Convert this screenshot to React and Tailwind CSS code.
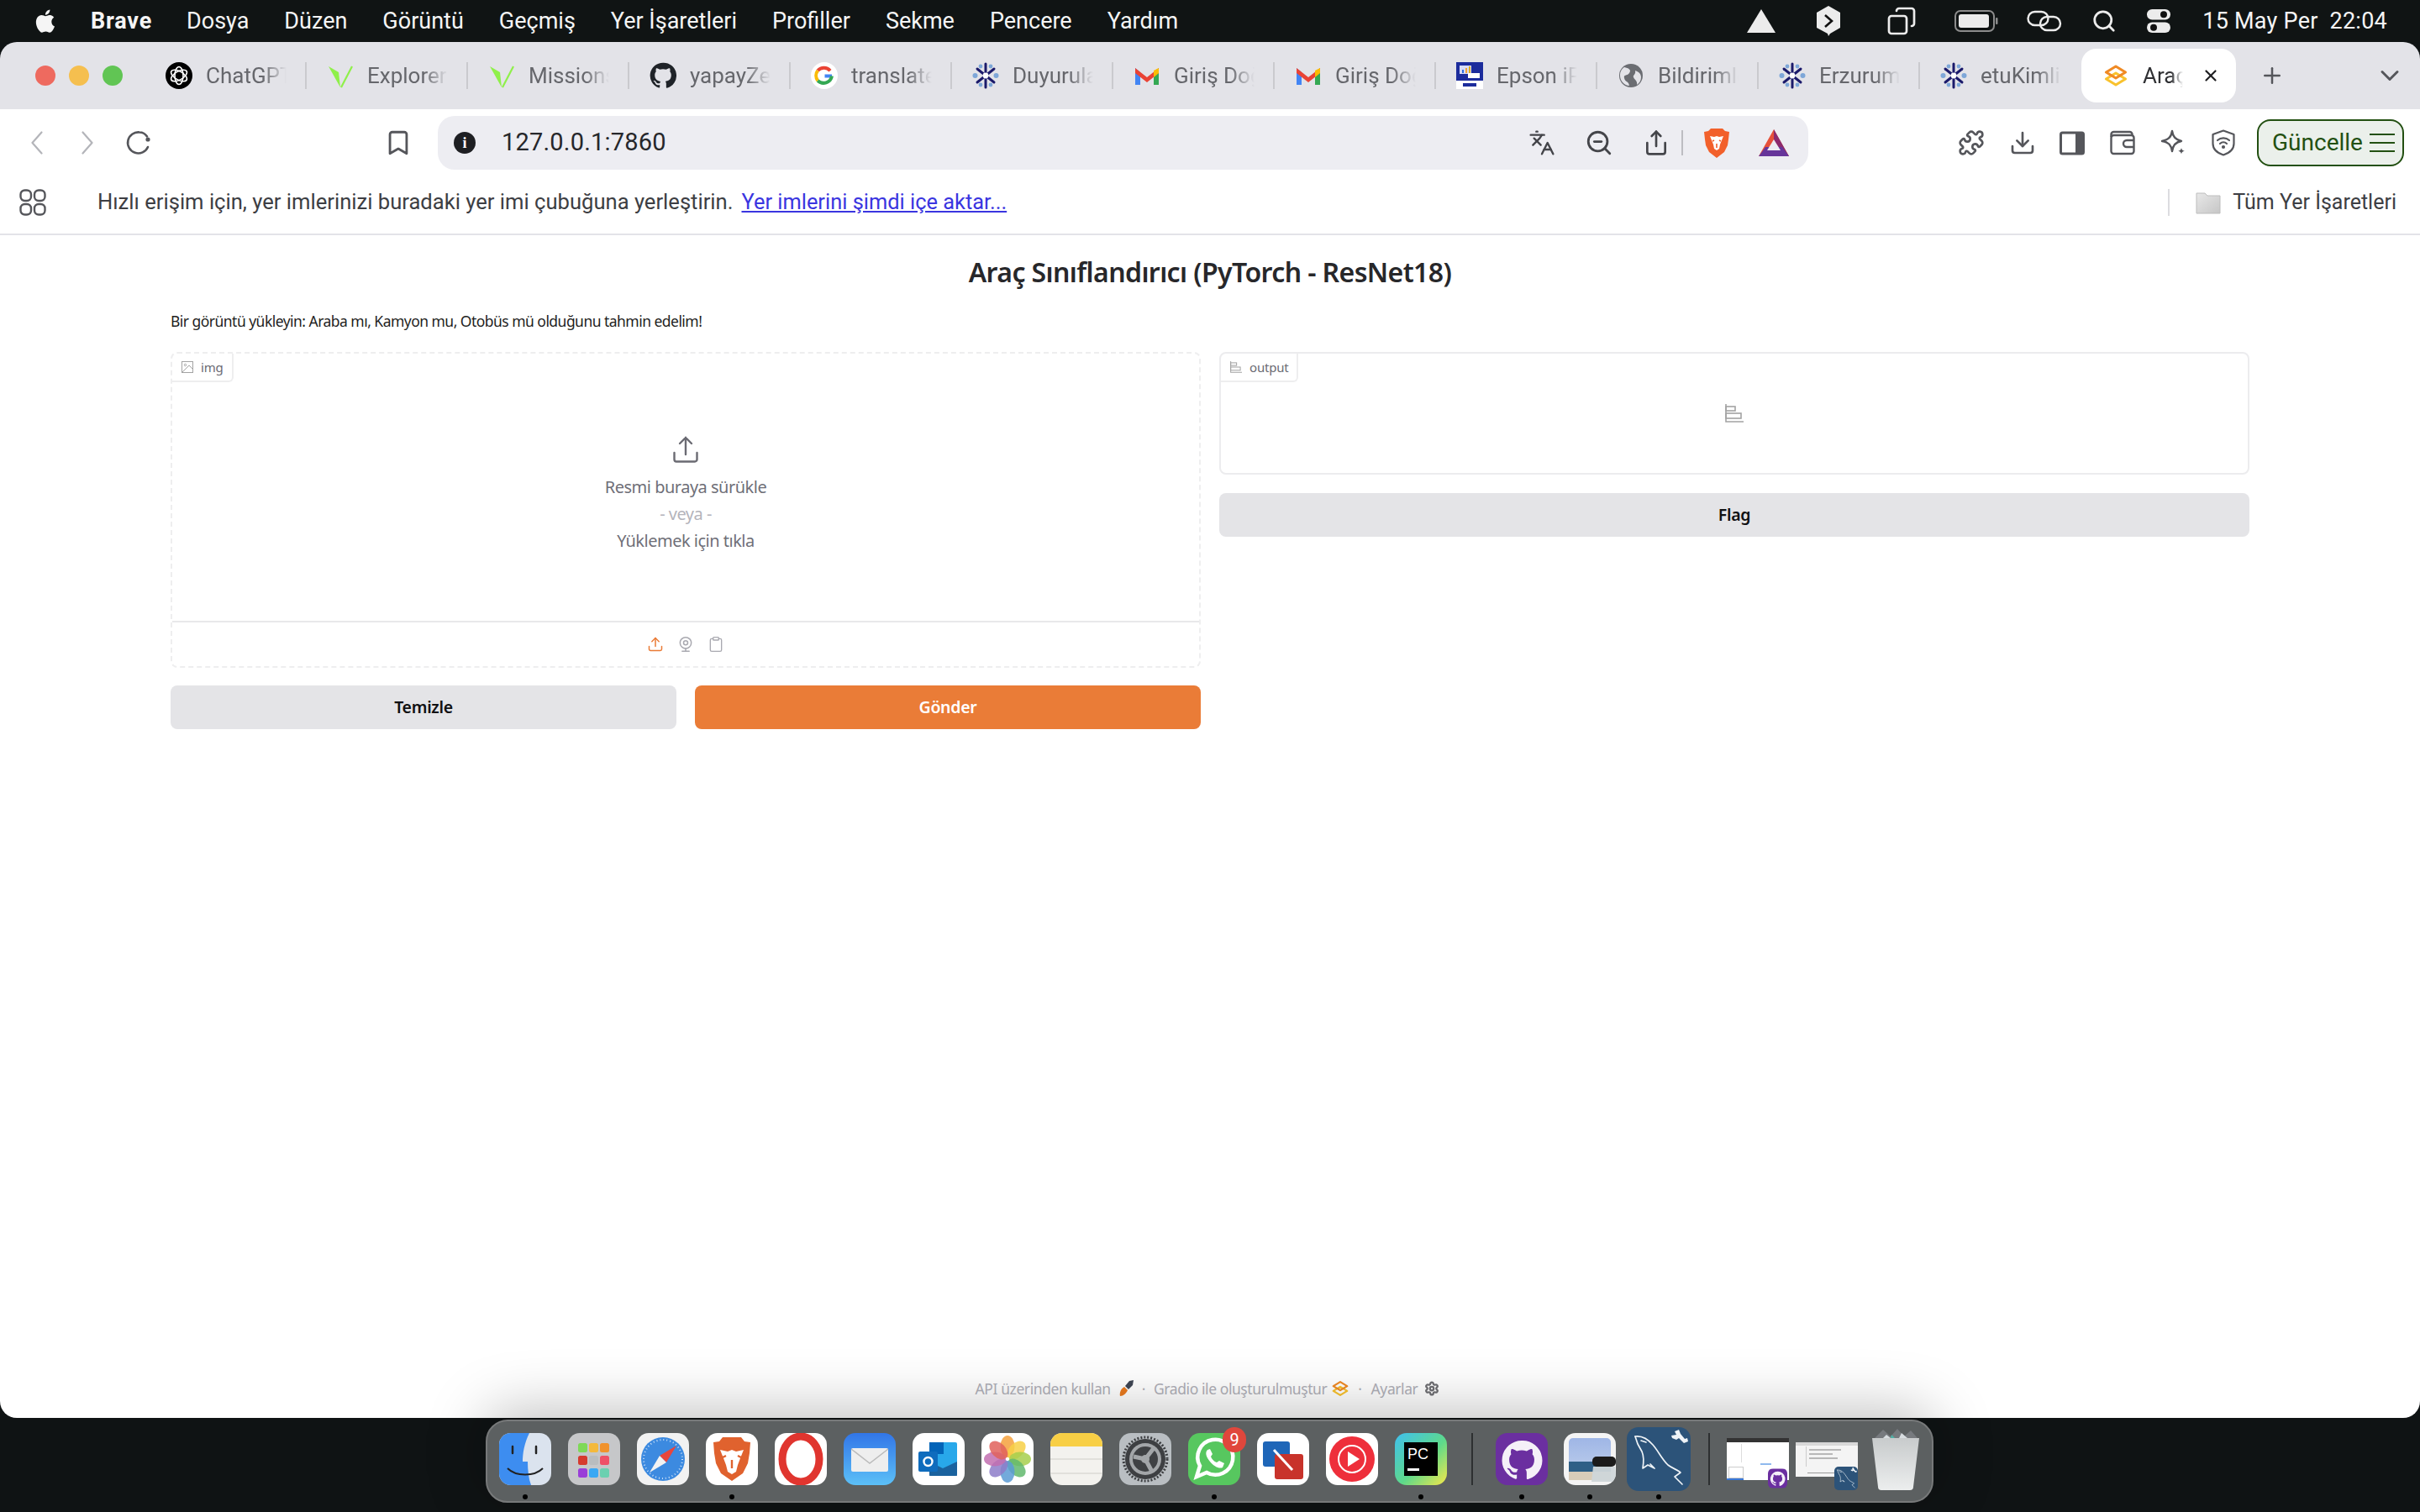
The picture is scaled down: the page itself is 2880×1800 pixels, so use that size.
import React from "react";
import { Bookmark, Languages, ZoomOut, Share, Puzzle, Download, Plus, X, ChevronDown, Search, Copy, Upload, Clipboard, Webcam, Settings } from "lucide-react";

const SF = "font-['Roboto','Liberation_Sans',sans-serif]";
const SS = "font-['Noto_Sans','Open_Sans',sans-serif]";

const GH_PATH = "M12 .5a11.5 11.5 0 0 0-3.64 22.41c.58.1.79-.25.79-.55v-2.02c-3.2.7-3.88-1.37-3.88-1.37-.52-1.33-1.28-1.69-1.28-1.69-1.05-.71.08-.7.08-.7 1.16.08 1.77 1.19 1.77 1.19 1.03 1.76 2.7 1.25 3.36.96.1-.75.4-1.25.73-1.54-2.55-.29-5.24-1.28-5.24-5.68 0-1.25.45-2.28 1.18-3.08-.12-.29-.51-1.46.11-3.04 0 0 .97-.31 3.16 1.18a11 11 0 0 1 5.76 0c2.2-1.49 3.16-1.18 3.16-1.18.63 1.58.23 2.75.11 3.04.74.8 1.18 1.83 1.18 3.08 0 4.41-2.69 5.39-5.25 5.67.41.36.78 1.06.78 2.14v3.17c0 .31.21.66.8.55A11.5 11.5 0 0 0 12 .5Z";

const Gradio = ({ s = 28 }) => (
  <svg width={s} height={s} viewBox="0 0 28 28" fill="none" strokeWidth="3.2" strokeLinejoin="round">
    <path d="M14 11 25.5 18 14 25 2.5 18Z" stroke="#f9c22e" />
    <path d="M14 3 25.5 10 14 17 2.5 10Z" stroke="#f08a24" />
  </svg>
);

const Snow = ({ s = 32 }) => (
  <svg width={s} height={s} viewBox="0 0 32 32">
    <g stroke="#1b1a6b" strokeWidth="3" strokeLinecap="round">
      <path d="M16 2v28" /><path d="M6 8l20 16" /><path d="M26 8 6 24" />
    </g>
    <g fill="#7ea7d8"><circle cx="3.5" cy="16" r="3" /><circle cx="28.5" cy="16" r="3" /><circle cx="10" cy="5" r="2.4" /><circle cx="22" cy="5" r="2.4" /><circle cx="10" cy="27" r="2.4" /><circle cx="22" cy="27" r="2.4" /></g>
    <circle cx="16" cy="16" r="3.4" fill="#fff" />
  </svg>
);

const Gmail = () => (
  <svg width="32" height="32" viewBox="0 0 32 32" fill="none">
    <path d="M2 7v20h6V12Z" fill="#4285f4" /><path d="M30 7v20h-6V12Z" fill="#34a853" />
    <path d="M2 7 16 18 30 7v6L16 24 2 13Z" fill="#ea4335" /><path d="M24 10l6-3v6l-6 5Z" fill="#fbbc04" />
  </svg>
);

const Vee = () => (
  <svg width="32" height="32" viewBox="0 0 32 32" fill="none">
    <path d="M2 5 16 30 14 12Z" fill="#8ff04a" /><path d="M30 5 17 30" stroke="#8ff04a" strokeWidth="2.2" />
  </svg>
);

const ChatGPT = () => (
  <svg width="32" height="32" viewBox="0 0 32 32" fill="none" stroke="#fff" strokeWidth="1.6">
    <circle cx="16" cy="16" r="16" fill="#000" stroke="none" />
    <ellipse cx="16" cy="16" rx="5" ry="10.5" /><ellipse cx="16" cy="16" rx="5" ry="10.5" transform="rotate(60 16 16)" /><ellipse cx="16" cy="16" rx="5" ry="10.5" transform="rotate(120 16 16)" />
  </svg>
);

const GitHubFav = () => (
  <svg width="32" height="32" viewBox="0 0 24 24" fill="#1f2328"><path d={GH_PATH} /></svg>
);

const Google = () => (
  <svg width="32" height="32" viewBox="0 0 32 32" fill="none">
    <circle cx="16" cy="16" r="16" fill="#fff" />
    <path d="M25 16.5H16.5" stroke="#4285f4" strokeWidth="4" />
    <path d="M23 10.2A10 10 0 0 0 8.2 10" stroke="#ea4335" strokeWidth="4" />
    <path d="M8.2 10a10 10 0 0 0 0 12" stroke="#fbbc05" strokeWidth="4" />
    <path d="M8.2 22A10 10 0 0 0 25 16.5" stroke="#34a853" strokeWidth="4" />
  </svg>
);

const Epson = () => (
  <svg width="32" height="32" viewBox="0 0 32 32">
    <rect width="32" height="32" fill="#fff" /><rect width="32" height="22" fill="#1c2c9c" />
    <rect x="4" y="4" width="14" height="10" fill="#d8dcf5" /><rect x="7" y="9" width="2" height="4" fill="#2f6fe0" /><rect x="11" y="7" width="2" height="6" fill="#f2a33a" /><rect x="15" y="5" width="2" height="8" fill="#e0b020" />
    <rect x="14" y="13" width="14" height="6" fill="#fff" />
    <rect x="8" y="25" width="16" height="4" fill="#1c2c9c" />
  </svg>
);

const Globe = () => (
  <svg width="28" height="32" viewBox="0 0 28 28">
    <circle cx="14" cy="14" r="14" fill="#6b6d72" />
    <path d="M6 4c5 1 9 3 6 7s-7 1-6 6 5 3 6 9C6 26 1 20 1 14 1 9 3 6 6 4ZM19 8c3 1 7 3 7 8 0 4-2 7-5 9 1-5-3-6-4-9s3-3 2-8Z" fill="#e3e3e8" />
  </svg>
);

const tabs = [
  ["ChatGPT", <ChatGPT />], ["Explorer", <Vee />], ["Missions", <Vee />], ["yapayZeka", <GitHubFav />],
  ["translate", <Google />], ["Duyurular", <Snow />], ["Giriş Doğr", <Gmail />], ["Giriş Doğr", <Gmail />],
  ["Epson iPrint", <Epson />], ["Bildirimler", <Globe />], ["Erzurum", <Snow />], ["etuKimlik", <Snow />],
];

const Tab = ({ label, icon, last }) => (
  <div className="relative flex h-full w-[192px] shrink-0 items-center pl-[24px]">
    <span className="flex w-[32px] shrink-0 justify-center">{icon}</span>
    <span className="ml-[16px] w-[96px] overflow-hidden whitespace-nowrap text-[26px] text-[#66676c] [mask-image:linear-gradient(to_right,black_70%,transparent)]">{label}</span>
    {!last && <span className="absolute right-0 top-[1px] h-[32px] w-[2px] bg-[#cacace]" />}
  </div>
);

const TabStrip = () => (
  <div className="flex h-[80px] shrink-0 items-center bg-[#e3e3e8] pl-[42px]">
    <span className="h-[24px] w-[24px] rounded-full bg-[#ee6a5f]" />
    <span className="ml-[16px] h-[24px] w-[24px] rounded-full bg-[#f5bf4f]" />
    <span className="ml-[16px] h-[24px] w-[24px] rounded-full bg-[#61c554]" />
    <div className="ml-[27px] flex h-[34px] items-center">
      {tabs.map((t, i) => <Tab key={i} label={t[0]} icon={t[1]} last={i === tabs.length - 1} />)}
    </div>
    <div className="flex h-[64px] w-[184px] shrink-0 items-center rounded-[18px] bg-white pl-[27px]">
      <Gradio s={28} />
      <span className="ml-[18px] w-[48px] overflow-hidden whitespace-nowrap text-[26px] text-[#303134] [mask-image:linear-gradient(to_right,black_70%,transparent)]">Araç</span>
      <X className="ml-[22px]" size={22} color="#1f1f22" strokeWidth={2.4} />
    </div>
    <Plus className="ml-[28px]" size={30} color="#55565b" strokeWidth={2} />
    <ChevronDown className="ml-[107px]" size={36} color="#55565b" strokeWidth={2} />
  </div>
);

const Reload = () => (
  <svg width="32" height="32" viewBox="0 0 32 32" fill="none" stroke="#55565b" strokeWidth="2.6" strokeLinecap="round">
    <path d="M27 21A12.5 12.5 0 1 1 17 3.5c4 0 7 2 9 5" /><circle cx="27" cy="12" r="2.6" fill="#55565b" stroke="none" />
  </svg>
);

const Chevron = ({ flip }) => (
  <svg width="14" height="28" viewBox="0 0 14 28" fill="none" stroke="#b4b5ba" strokeWidth="2.2" strokeLinecap="round" strokeLinejoin="round">
    <path d={flip ? "M1.5 1.5 12.5 14 1.5 26.5" : "M12.5 1.5 1.5 14 12.5 26.5"} />
  </svg>
);

const BraveLogo = ({ w = 32, h = 36 }) => (
  <svg width={w} height={h} viewBox="0 0 32 36">
    <path d="M9 1h14l3 3 5 1-1 9-1 7-4 8-9 7-9-7-4-8-1-7L1 5l5-1Z" fill="#f2602b" />
    <path d="M8 10l5 1 3-1 3 1 5-1-2 5-2 5-1 5-3 2-3-2-1-5-2-5Z" fill="#fff" />
    <path d="M13 15l-2 1M19 15l2 1M16 19v5" stroke="#f2602b" strokeWidth="1.6" />
  </svg>
);

const BAT = () => (
  <svg width="36" height="32" viewBox="0 0 36 32">
    <path d="M18 0 36 32H0Z" fill="#e6513a" /><path d="M18 0 36 32H24L18 15Z" fill="#8c2a6d" /><path d="M0 32 8 21H28L36 32Z" fill="#66359a" /><path d="M18 12 26 25H10Z" fill="#ededf2" />
  </svg>
);

const SideBar = () => (
  <svg width="30" height="30" viewBox="0 0 30 30" fill="none">
    <rect x="1.5" y="3" width="27" height="25" rx="2" stroke="#55565b" strokeWidth="3" /><rect x="19" y="3" width="10" height="25" rx="1" fill="#55565b" />
  </svg>
);

const WalletIcon = () => (
  <svg width="30" height="30" viewBox="0 0 30 30" fill="none" stroke="#55565b" strokeWidth="2.4" strokeLinejoin="round">
    <path d="M1.5 8V5a3 3 0 0 1 3-3h19a3 3 0 0 1 3 3v1" /><rect x="1.5" y="6" width="27" height="22" rx="3" />
    <path d="M28 12H20a3.5 3.5 0 0 0 0 8h8" />
  </svg>
);

const SparkleIcon = () => (
  <svg width="32" height="32" viewBox="0 0 32 32" fill="none" stroke="#55565b" strokeWidth="2.4" strokeLinejoin="round">
    <path d="M14 2c1 7 4 10 11 12-7 1-10 5-11 12-1-7-4-11-12-12 8-2 11-5 12-12Z" />
    <path d="M26 22c.4 2.3 1.4 3.3 3.8 3.8-2.4.4-3.4 1.4-3.8 3.8-.4-2.4-1.4-3.4-3.8-3.8 2.4-.5 3.4-1.5 3.8-3.8Z" fill="#55565b" stroke="none" transform="translate(-1 0)" />
  </svg>
);

const ShieldWifi = () => (
  <svg width="30" height="32" viewBox="0 0 30 32" fill="none" stroke="#55565b" strokeWidth="2.2" strokeLinecap="round" strokeLinejoin="round">
    <path d="M15 1.5 27.5 6v11c0 6.5-5 11-12.5 13.5C7.5 28 2.5 23.5 2.5 17V6Z" />
    <path d="M8 13a10.5 10.5 0 0 1 14 0M11 17a6 6 0 0 1 8 0" /><circle cx="15" cy="21" r="1" fill="#55565b" />
  </svg>
);

const AppsGrid = () => (
  <svg width="32" height="32" viewBox="0 0 32 32" fill="none" stroke="#55565b" strokeWidth="2.4">
    <rect x="1.5" y="1.5" width="12.5" height="12.5" rx="5" /><rect x="18" y="1.5" width="12.5" height="12.5" rx="5" /><rect x="1.5" y="18" width="12.5" height="12.5" rx="5" /><rect x="18" y="18" width="12.5" height="12.5" rx="5" />
  </svg>
);

const InfoDot = () => (
  <span className="flex h-[26px] w-[26px] items-center justify-center rounded-full bg-[#1e1f23] font-['Liberation_Serif',serif] text-[18px] font-bold text-white">i</span>
);

const Toolbar = () => (
  <div className="flex h-[80px] shrink-0 items-center bg-white pl-[37px]">
    <Chevron />
    <span className="ml-[46px]"><Chevron flip /></span>
    <span className="ml-[38px]"><Reload /></span>
    <Bookmark className="ml-[276px]" size={34} color="#55565b" strokeWidth={2} />
    <div className="ml-[30px] flex h-[64px] w-[1631px] shrink-0 items-center rounded-[20px] bg-[#ededf2] pl-[19px]">
      <InfoDot />
      <span className="ml-[31px] text-[29px] tracking-[0.2px] text-[#26272b]">127.0.0.1:7860</span>
      <Languages className="ml-[1026px]" size={32} color="#44454a" strokeWidth={1.8} />
      <ZoomOut className="ml-[35px]" size={34} color="#44454a" strokeWidth={2} />
      <Share className="ml-[35px]" size={32} color="#44454a" strokeWidth={2} />
      <span className="ml-[14px] h-[30px] w-[2px] bg-[#bdbdc2]" />
      <span className="ml-[24px]"><BraveLogo /></span>
      <span className="ml-[34px]"><BAT /></span>
    </div>
    <Puzzle className="ml-[178px]" size={32} color="#55565b" strokeWidth={2} />
    <Download className="ml-[29px]" size={32} color="#55565b" strokeWidth={2} />
    <span className="ml-[28px]"><SideBar /></span>
    <span className="ml-[30px]"><WalletIcon /></span>
    <span className="ml-[30px]"><SparkleIcon /></span>
    <span className="ml-[28px]"><ShieldWifi /></span>
    <div className="ml-[25px] flex h-[56px] w-[175px] shrink-0 items-center rounded-[16px] border-2 border-[#235012] bg-[#ebf0eb] pl-[16px] text-[28px] text-[#235012]">
      Güncelle
      <span className="ml-[8px] flex w-[30px] flex-col gap-[8px]">
        <span className="h-[2px] bg-[#235012]" /><span className="h-[2px] bg-[#235012]" /><span className="h-[2px] bg-[#235012]" />
      </span>
    </div>
  </div>
);

const Folder = () => (
  <svg width="30" height="30" viewBox="0 0 30 30">
    <defs><linearGradient id="fd" x1="0" y1="0" x2="1" y2="1"><stop offset="0" stopColor="#e8e8e8" /><stop offset="1" stopColor="#c6c6c6" /></linearGradient></defs>
    <path d="M1 4h10l3 3h15v21H1Z" fill="url(#fd)" stroke="#bdbdbd" />
  </svg>
);

const BookmarksBar = () => (
  <div className="flex h-[70px] shrink-0 items-center border-b-2 border-[#e3e3e8] bg-white pb-[7px] pl-[23px] pr-[28px] text-[25.6px] text-[#3d3e43]">
    <AppsGrid />
    <span className="ml-[61px]">Hızlı erişim için, yer imlerinizi buradaki yer imi çubuğuna yerleştirin.</span>
    <span className="ml-[10px] text-[25.4px] text-[#3a35e0] underline">Yer imlerini şimdi içe aktar...</span>
    <span className="ml-auto h-[32px] w-[2px] bg-[#dcdce0]" />
    <span className="ml-[31px]"><Folder /></span>
    <span className="ml-[14px] text-[25px]">Tüm Yer İşaretleri</span>
  </div>
);

const ChartIcon = ({ s = 22, c = "#a3a3a3" }) => (
  <svg width={s} height={s} viewBox="0 0 22 22" fill="none" stroke={c} strokeWidth="1.6">
    <path d="M1 0v21h21" /><rect x="1" y="3" width="11" height="5" /><rect x="1" y="11" width="18" height="6" />
  </svg>
);

const ImgIcon = () => (
  <svg width="14" height="14" viewBox="0 0 14 14" fill="none" stroke="#a3a3a3" strokeWidth="1">
    <rect x=".5" y=".5" width="13" height="13" /><circle cx="4.5" cy="4.5" r="1.2" /><path d="M1 13 9 5l4 4" />
  </svg>
);

const Label = ({ icon, text }) => (
  <div className="flex h-[34px] w-fit items-center gap-[9px] rounded-br-[6px] border-b-2 border-r-2 border-[#eeeeef] pl-[11px] pr-[10px] text-[15px] tracking-[-0.2px] text-[#6b6b73]">
    {icon}<span>{text}</span>
  </div>
);

const UploadBig = () => (
  <svg width="30" height="32" viewBox="0 0 30 32" fill="none" stroke="#6b6b73" strokeWidth="2.4" strokeLinecap="round">
    <path d="M15 22V2M8 9l7-7 7 7" /><path d="M1.5 20v8a2.5 2.5 0 0 0 2.5 2.5h22a2.5 2.5 0 0 0 2.5-2.5v-8" />
  </svg>
);

const Btn = ({ children, cls }) => (
  <div className={`flex h-[52px] items-center justify-center rounded-[8px] text-[19.5px] font-semibold tracking-[-0.3px] ${cls}`}>{children}</div>
);

const GradioPage = () => (
  <main className={`relative flex min-h-0 flex-1 flex-col bg-white px-[203px] ${SS}`}>
    <h1 className="mt-[22px] h-[44px] text-center text-[32px] font-semibold leading-[44px] tracking-[-0.6px] text-[#27272a]">Araç Sınıflandırıcı (PyTorch - ResNet18)</h1>
    <p className="mt-[24px] h-[24px] text-[17.5px] leading-[24px] tracking-[-0.53px] text-[#1f1f23]">Bir görüntü yükleyin: Araba mı, Kamyon mu, Otobüs mü olduğunu tahmin edelim!</p>
    <div className="mt-[25px] grid grid-cols-2 gap-[22px]">
      <div className="flex flex-col gap-[21px]">
        <div className="flex h-[376px] flex-col rounded-[8px] border-2 border-dashed border-[#eeeeef]">
          <Label icon={<ImgIcon />} text="img" />
          <div className="flex flex-1 flex-col items-center pt-[64px] text-[20px] tracking-[-0.5px] text-[#6f6f78]">
            <UploadBig />
            <span className="mt-[12px] h-[33px] leading-[33px]">Resmi buraya sürükle</span>
            <span className="h-[32px] leading-[32px] text-[#b4b4bb]">- veya -</span>
            <span className="h-[32px] leading-[32px]">Yüklemek için tıkla</span>
          </div>
          <div className="flex h-[54px] shrink-0 items-center justify-center gap-[16px] border-t-2 border-[#e8e8ea]">
            <Upload size={20} color="#ea7b36" strokeWidth={1.8} />
            <Webcam size={20} color="#a9a9b0" strokeWidth={1.8} />
            <Clipboard size={20} color="#a9a9b0" strokeWidth={1.6} />
          </div>
        </div>
        <div className="grid grid-cols-2 gap-[22px]">
          <Btn cls="bg-[#e4e4e7] text-[#111113]">Temizle</Btn>
          <Btn cls="bg-[#ea7c37] text-white">Gönder</Btn>
        </div>
      </div>
      <div className="flex flex-col gap-[22px] self-start">
        <div className="flex h-[146px] flex-col rounded-[8px] border-2 border-[#ececee]">
          <Label icon={<ChartIcon s={14} />} text="output" />
          <div className="flex justify-center pt-[26px]"><ChartIcon /></div>
        </div>
        <Btn cls="bg-[#e4e4e7] text-[#111113]">Flag</Btn>
      </div>
    </div>
    <footer className="mt-auto flex h-[70px] items-start justify-center pr-[6px] pt-[22px] text-[17.5px] tracking-[-0.42px] text-[#b0b0b8]">
      <div className="flex h-[26px] items-center">
        <span>API üzerinden kullan</span>
        <svg className="ml-[10px]" width="18" height="20" viewBox="0 0 18 20"><path d="M1 19c-1-4 1-9 5-11l4 4c-2 4-5 7-9 7Z" fill="#ea7b1f" /><path d="M7 7l5-6 5-1-1 6-5 5Z" fill="#3f4654" /></svg>
        <span className="ml-[9px]">·</span>
        <span className="ml-[10px]">Gradio ile oluşturulmuştur</span>
        <span className="ml-[6px]"><Gradio s={20} /></span>
        <span className="ml-[11px]">·</span>
        <span className="ml-[11px]">Ayarlar</span>
        <Settings className="ml-[8px]" size={18} color="#6f6f73" strokeWidth={3} />
      </div>
    </footer>
  </main>
);

const AppleLogo = () => (
  <svg width="26" height="32" viewBox="0 0 24 29" fill="#f5f5f5">
    <path d="M19.7 15.3c0-3.2 2.6-4.7 2.7-4.8-1.5-2.2-3.8-2.5-4.6-2.5-1.9-.2-3.8 1.2-4.8 1.2s-2.5-1.1-4.1-1.1c-2.1 0-4.1 1.2-5.2 3.1-2.2 3.9-.6 9.6 1.6 12.7 1.1 1.5 2.3 3.2 4 3.2 1.6-.1 2.2-1 4.1-1s2.5 1 4.1 1c1.7 0 2.8-1.5 3.8-3 1.2-1.8 1.7-3.5 1.7-3.6-.1 0-3.3-1.3-3.3-5.2ZM16.6 6c.9-1 1.4-2.5 1.3-3.9-1.2.1-2.8.9-3.7 1.9-.8.9-1.5 2.4-1.3 3.8 1.4.1 2.8-.8 3.7-1.8Z" />
  </svg>
);

const menus = ["Dosya", "Düzen", "Görüntü", "Geçmiş", "Yer İşaretleri", "Profiller", "Sekme", "Pencere", "Yardım"];

const MenuBar = () => (
  <div className="flex h-[50px] shrink-0 items-center bg-[#101414] pl-[40px] pr-[39px] text-[27px] text-[#f5f5f5]">
    <AppleLogo />
    <span className="ml-[42px] font-bold tracking-[0.8px]">Brave</span>
    <div className="ml-[41px] flex gap-[42px]">{menus.map(m => <span key={m}>{m}</span>)}</div>
    <svg className="ml-auto" width="34" height="28" viewBox="0 0 34 28"><path d="M17 0 34 28H0Z" fill="#ececec" /></svg>
    <svg className="ml-[48px]" width="30" height="36" viewBox="0 0 30 36"><path d="M15 0 29 8v18l-12 7-2 3-1-3L1 26V8Z" fill="#ececec" /><path d="M11 11l8 7-8 7" stroke="#111" strokeWidth="2.6" fill="none" /></svg>
    <Copy className="ml-[54px] -scale-x-100" size={36} color="#ececec" strokeWidth={1.8} />
    <svg className="ml-[45px]" width="52" height="26" viewBox="0 0 52 26" fill="none"><rect x="1" y="1" width="46" height="24" rx="6" stroke="#8c8c8c" strokeWidth="2" /><rect x="5" y="5" width="36" height="16" rx="3" fill="#ececec" /><rect x="49" y="9" width="2.5" height="8" rx="1" fill="#8c8c8c" /></svg>
    <svg className="ml-[34px]" width="42" height="26" viewBox="0 0 42 26" fill="none" stroke="#ececec" strokeWidth="2.4"><rect x="1.5" y="2" width="24" height="16" rx="8" /><rect x="16" y="8" width="24" height="16" rx="8" /></svg>
    <Search className="ml-[35px]" size={30} color="#ececec" strokeWidth={2.2} />
    <svg className="ml-[36px]" width="28" height="28" viewBox="0 0 28 28"><rect x="0" y="0" width="28" height="12.5" rx="6.2" fill="#ececec" /><circle cx="20" cy="6.2" r="4" fill="#111" /><rect x="0" y="15.5" width="28" height="12.5" rx="6.2" fill="#ececec" /><circle cx="8" cy="21.7" r="4" fill="#111" /></svg>
    <span className="ml-[38px] whitespace-pre tracking-[0.25px]">15 May Per  22:04</span>
  </div>
);

const Tile = ({ children, cls = "" }) => (
  <div className={`h-[62px] w-[62px] shrink-0 overflow-hidden rounded-[14px] ${cls}`}>{children}</div>
);

const I = ({ children, vb = "0 0 62 62" }) => <svg width="100%" height="100%" viewBox={vb}>{children}</svg>;

const GithubDock = () => (
  <I><rect width="62" height="62" fill="#6b2fa0" /><g transform="translate(6.5 8) scale(2.04)"><path d={GH_PATH} fill="#f5f0f8" /></g></I>
);

const Dolphin = () => (
  <I vb="0 0 76 76">
    <rect width="76" height="76" fill="#2c5379" />
    <g fill="none" stroke="#eef3f7" strokeWidth="1.7" strokeLinejoin="round" strokeLinecap="round">
      <path d="M10 11c8-1 15 3 21 10 7 8 10 16 18 24 5 4 12 6 15 9l-7 5 9 9" />
      <path d="M10 11l3 9 5 9c3 7 2 14 1 20l6-4 8 4-5-5" />
      <path d="M17 16l6 2" />
    </g>
    <path d="M53 10l6-1-2-4 5-2 2 5 5 6 3-1 1 4-5 2-6-6-3 2-5-2Z" fill="#eef3f7" />
  </I>
);

const dockApps = [
  { dot: true, el: <I><rect width="62" height="62" fill="#dbe3ee" /><path d="M0 0h36c-6 12-8 24-8 34h6c0 10 1 20 4 28H0Z" fill="#3d8df0" /><path d="M16 16v8M44 16v8" stroke="#222" strokeWidth="2.5" strokeLinecap="round" /><path d="M10 42c10 10 32 10 42 0" stroke="#222" strokeWidth="2" fill="none" /></I> },
  { el: <I><rect width="62" height="62" fill="#c6c7c9" />{[["#7ed957", 12, 12], ["#f4b93c", 25, 12], ["#f0922c", 38, 12], ["#d63a2e", 12, 27], ["#b9bdbf", 25, 27], ["#ee5168", 38, 27], ["#9a3ed8", 12, 42], ["#3aa8f4", 25, 42], ["#6bd0b0", 38, 42]].map(([c, x, y]) => <rect key={c} x={x} y={y} width="11" height="11" rx="2.5" fill={c} />)}</I> },
  { el: <I><rect width="62" height="62" fill="#f2f2f2" /><circle cx="31" cy="31" r="26" fill="#3c8ae0" /><circle cx="31" cy="31" r="23" fill="none" stroke="#cfe2f7" strokeWidth="2" strokeDasharray="1 3" /><path d="M47 15 27 27l8 8Z" fill="#e8453c" /><path d="M15 47l12-20 8 8Z" fill="#f2f2f2" /></I> },
  { dot: true, el: <I><rect width="62" height="62" fill="#fff" /><path d="M20 5h22l4 5 7 1-1 13-2 12-6 12-13 9-13-9-6-12-2-12-1-13 7-1Z" fill="#e0622e" /><path d="M17 20l9 2 5-2 5 2 9-2-4 10-3 8-2 8-5 3-5-3-2-8-3-8Z" fill="#fff" /><path d="M24 27l-4 2M38 27l4 2M31 32v10" stroke="#e0622e" strokeWidth="2.4" fill="none" /></I> },
  { el: <I><rect width="62" height="62" fill="#fff" /><ellipse cx="31" cy="31" rx="22" ry="27" fill="none" stroke="#e0352f" strokeWidth="9" /></I> },
  { el: <I><defs><linearGradient id="ml" x1="0" y1="0" x2="0" y2="1"><stop offset="0" stopColor="#3276e8" /><stop offset="1" stopColor="#5cc0f7" /></linearGradient></defs><rect width="62" height="62" fill="url(#ml)" /><rect x="9" y="18" width="44" height="28" rx="2" fill="#eee" /><path d="M9 19l22 17 22-17" stroke="#bbb" strokeWidth="1.5" fill="none" /></I> },
  { el: <I><rect width="62" height="62" fill="#fff" /><rect x="20" y="11" width="33" height="40" rx="2" fill="#28a8ea" /><rect x="20" y="11" width="17" height="14" fill="#0364b8" /><path d="M20 34l16 8 17-8v17H20Z" fill="#14447d" opacity=".7" /><rect x="7" y="22" width="23" height="24" rx="2" fill="#0f6cbd" /><circle cx="18.5" cy="34" r="5" fill="none" stroke="#fff" strokeWidth="2.4" /></I> },
  { el: <I><rect width="62" height="62" fill="#fff" />{["#f5a13c", "#f7d046", "#a7cf4e", "#62b86d", "#5b9bd5", "#8d7cc9", "#c26fb0", "#e0615c"].map((c, i) => <ellipse key={c} cx="31" cy="16" rx="8.5" ry="13" fill={c} opacity=".85" transform={`rotate(${i * 45} 31 31)`} />)}</I> },
  { el: <I><rect width="62" height="62" fill="#f3f2ee" /><rect width="62" height="16" fill="#f8cf45" /><path d="M0 31h62M0 48h62" stroke="#dcdad5" strokeWidth="1.5" /></I> },
  { el: <I><rect width="62" height="62" fill="#b9bec2" /><circle cx="31" cy="31" r="24" fill="#3d3f42" /><circle cx="31" cy="31" r="26" fill="none" stroke="#3d3f42" strokeWidth="3" strokeDasharray="2 2" /><circle cx="31" cy="31" r="19" fill="#a3a6a9" /><circle cx="31" cy="31" r="15" fill="#3f4144" /><path d="M31 31 41 18M31 31 17 28M31 31l8 15" stroke="#a3a6a9" strokeWidth="5" /><circle cx="31" cy="31" r="5" fill="#a3a6a9" /></I> },
  { dot: true, badge: true, el: <I><rect width="62" height="62" fill="#57c75f" /><path d="M10 52l4-13a21 21 0 1 1 8 8Z" fill="none" stroke="#fff" strokeWidth="4.5" /><path d="M23 20c-3 3-2 8 3 14s11 9 15 7l2-5-6-3-3 2c-3-1-6-4-7-7l2-3-3-6Z" fill="#fff" /></I> },
  { el: <I><rect width="62" height="62" fill="#fff" /><rect x="7" y="10" width="32" height="30" rx="3" fill="#1e66b8" /><rect x="21" y="25" width="34" height="30" rx="3" fill="#c8332b" /><path d="M20 20l22 24" stroke="#fff" strokeWidth="3" /></I> },
  { el: <I><rect width="62" height="62" fill="#fff" /><circle cx="31" cy="31" r="27" fill="#ee2f3b" /><circle cx="31" cy="31" r="16" fill="none" stroke="#fff" strokeWidth="2" /><path d="M26 22l14 9-14 9Z" fill="#fff" /></I> },
  { dot: true, el: <I><defs><linearGradient id="pc" x1="0" y1="0" x2="1" y2="1"><stop offset="0" stopColor="#3fc0f0" /><stop offset=".55" stopColor="#5ed98a" /><stop offset="1" stopColor="#f5e84a" /></linearGradient></defs><rect width="62" height="62" fill="url(#pc)" /><rect x="11" y="11" width="40" height="40" fill="#000" /><text x="15" y="31" fontSize="18" fill="#fff" fontFamily="Liberation Sans">PC</text><rect x="15" y="42" width="14" height="3" fill="#fff" /></I> },
];

const Dot = ({ on }) => <span className={`mt-[11px] block h-[6px] w-[6px] rounded-full ${on ? "bg-black" : "bg-transparent"}`} />;

const Cell = ({ app }) => (
  <div className="relative flex w-[62px] shrink-0 flex-col items-center">
    <Tile>{app.el}</Tile>
    {app.badge && <span className="absolute -right-[7px] -top-[7px] flex h-[30px] w-[28px] items-center justify-center rounded-full bg-[#e0473c] text-[20px] text-white">9</span>}
    <Dot on={app.dot} />
  </div>
);

const ThumbA = () => (
  <div className="relative h-[50px] w-[74px] shrink-0 bg-white">
    <div className="h-[5px] bg-[#333]" />
    <div className="ml-[2px] mt-[2px] h-[22px] w-[16px] border-r border-[#dddddd]" />
    <div className="absolute left-[40px] top-[30px] h-[2px] w-[13px] bg-[#8fb9ee]" />
    <div className="absolute bottom-[2px] left-[2px] h-[14px] w-[18px] border border-[#cccccc]" />
    <div className="absolute bottom-0 left-0 h-[2px] w-[20px] bg-[#3a78d8]" />
    <div className="absolute -bottom-[10px] right-[2px] h-[24px] w-[23px] overflow-hidden rounded-[6px]"><GithubDock /></div>
  </div>
);

const ThumbB = () => (
  <div className="relative mt-[5px] h-[41px] w-[74px] shrink-0 bg-[#f4f4f4]">
    <div className="h-[4px] bg-[#d8d8d8]" />
    <div className="absolute left-[1px] top-[5px] h-[24px] w-[12px] border-r border-[#cccccc]" />
    <div className="absolute left-[16px] top-[8px] flex flex-col gap-[3px]"><span className="h-[2px] w-[38px] bg-[#b8b8b8]" /><span className="h-[2px] w-[28px] bg-[#b8b8b8]" /><span className="h-[2px] w-[34px] bg-[#b8b8b8]" /></div>
    <div className="absolute bottom-[4px] left-[14px] h-[1px] w-[58px] bg-[#999999]" />
    <div className="absolute -bottom-[16px] right-0 h-[28px] w-[28px] overflow-hidden rounded-[5px]"><Dolphin /></div>
  </div>
);

const Dock = () => (
  <div className="relative z-10 flex h-[112px] shrink-0 justify-center bg-[#0f1314] pt-[2px]">
    <div className="-ml-[1px] flex h-[99px] w-[1723px] items-start rounded-[26px] border-2 border-[#77797a] bg-[#5c6061] pl-[14px] pt-[14px] shadow-[0_-10px_70px_rgba(0,0,0,0.26)]">
      <div className="flex gap-[20px]">{dockApps.map((a, i) => <Cell key={i} app={a} />)}</div>
      <span className="ml-[29px] h-[62px] w-[2px] bg-[#2d3031]" />
      <div className="ml-[27px] flex gap-[19px]">
        <Cell app={{ dot: true, el: <GithubDock /> }} />
        <Cell app={{ dot: true, el: <I><rect width="62" height="62" fill="#f4f4f4" /><defs><linearGradient id="sk" x1="0" y1="0" x2="0" y2="1"><stop offset="0" stopColor="#9fb6e6" /><stop offset="1" stopColor="#c2d2ec" /></linearGradient></defs><rect x="6" y="6" width="50" height="50" rx="5" fill="url(#sk)" /><rect x="6" y="34" width="50" height="14" fill="#2f5f86" /><rect x="6" y="46" width="50" height="10" fill="#d9cdb9" /><rect x="34" y="28" width="28" height="12" rx="5" fill="#1b1b1b" /><path d="M35 40h26l2 18H33Z" fill="#cfd6d9" opacity=".95" /></I> }} />
      </div>
      <div className="relative z-10 ml-[13px] -mt-[7px] flex w-[76px] shrink-0 flex-col items-center">
        <div className="h-[76px] w-[76px] overflow-hidden rounded-[14px]"><Dolphin /></div>
        <span className="mt-[4px] block h-[6px] w-[6px] rounded-full bg-black" />
      </div>
      <span className="ml-[21px] h-[62px] w-[2px] bg-[#2d3031]" />
      <div className="ml-[20px] mt-[6px] flex items-start gap-[8px]"><ThumbA /><ThumbB /></div>
      <svg className="ml-[16px] -mt-[6px]" width="58" height="74" viewBox="0 0 58 74">
        <defs><linearGradient id="tr" x1="0" y1="0" x2="0" y2="1"><stop offset="0" stopColor="#c8cbcc" /><stop offset="1" stopColor="#eceeee" /></linearGradient></defs>
        <path d="M4 12 14 2l9 8 8-9 8 9 8-7 8 9Z" fill="#777a7e" />
        <path d="M18 8l5 4h-9ZM36 6l7 6h-10Z" fill="#d8dde0" /><path d="M24 8l4 4h-5Z" fill="#4fb3a8" />
        <path d="M1 12h56l-7 58a4 4 0 0 1-4 4H12a4 4 0 0 1-4-4Z" fill="url(#tr)" />
      </svg>
    </div>
  </div>
);

export default function App() {
  return (
    <div className={`flex h-[1800px] w-[2880px] flex-col overflow-hidden bg-[#0f1314] ${SF}`}>
      <MenuBar />
      <div className="flex min-h-0 flex-1 flex-col overflow-hidden rounded-[20px]">
        <TabStrip />
        <Toolbar />
        <BookmarksBar />
        <GradioPage />
      </div>
      <Dock />
    </div>
  );
}
